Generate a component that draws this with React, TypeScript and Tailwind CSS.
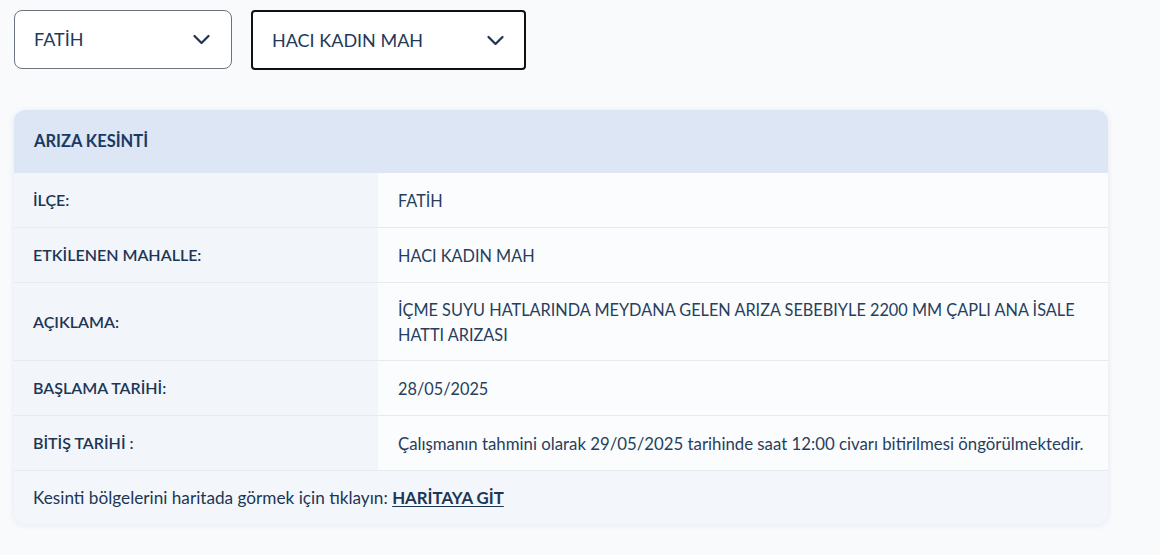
import React from 'react';

type Row = { label: string; value: string; wide?: boolean };

const rows: Row[] = [
  { label: 'İLÇE:', value: 'FATİH' },
  { label: 'ETKİLENEN MAHALLE:', value: 'HACI KADIN MAH' },
  {
    label: 'AÇIKLAMA:',
    value: 'İÇME SUYU HATLARINDA MEYDANA GELEN ARIZA SEBEBIYLE 2200 MM ÇAPLI ANA İSALE HATTI ARIZASI',
  },
  { label: 'BAŞLAMA TARİHİ:', value: '28/05/2025' },
  {
    label: 'BİTİŞ TARİHİ :',
    value: 'Çalışmanın tahmini olarak 29/05/2025 tarihinde saat 12:00 civarı bitirilmesi öngörülmektedir.',
    wide: true,
  },
];

const Chevron: React.FC = () => (
  <svg width="21" height="21" viewBox="0 0 24 24" fill="none" stroke="#1f3550" strokeWidth="2.6" strokeLinecap="round" strokeLinejoin="round">
    <path d="M4 8l8 8 8-8" />
  </svg>
);

const App: React.FC = () => {
  return (
    <div className="min-h-[555px] bg-[#f8fafc] px-[14px] pt-[10px] font-['Lato',sans-serif] text-[#1c3656]">
      <div className="flex gap-[19px]">
        <div className="flex h-[59px] w-[218px] items-center justify-between rounded-lg border border-[#6b7280] bg-white pl-[19px] pr-[19px] text-[18px] text-[#22395a]">
          <span>FATİH</span>
          <Chevron />
        </div>
        <div className="flex h-[60px] w-[275px] items-center justify-between rounded-[4px] border-2 border-[#111] bg-white pl-[19px] pr-[18px] text-[18px] text-[#22395a]">
          <span>HACI KADIN MAH</span>
          <Chevron />
        </div>
      </div>

      <div className="mt-[40px] w-[1094px] overflow-hidden rounded-xl bg-[#f3f6fa] shadow-[0_1px_6px_rgba(148,163,184,0.18)]">
        <div className="flex h-[63px] items-center bg-[#dce6f5] px-[20px] text-[16.5px] font-bold text-[#1b3a63]">
          ARIZA KESİNTİ
        </div>
        {rows.map((r) => (
          <div key={r.label} className="grid grid-cols-[364px_1fr] border-b border-[#e6eaf0]">
            <div className="flex items-center bg-[#f2f5f9] px-[19px] text-[16px] font-semibold">{r.label}</div>
            <div
              className={
                r.wide
                  ? 'flex min-h-[54px] items-center bg-[#fbfcfe] py-[13.5px] pl-[20px] pr-[20px] text-[16.8px] leading-[25px] text-[#263f5c]'
                  : 'flex min-h-[54px] items-center bg-[#fbfcfe] py-[13.5px] pl-[20px] pr-[24px] text-[16.3px] leading-[25px] text-[#263f5c]'
              }
            >
              {r.value}
            </div>
          </div>
        ))}
        <div className="flex h-[53px] items-center bg-[#f3f6fa] px-[19px] text-[17.2px]">
          <span>Kesinti bölgelerini haritada görmek için tıklayın:&nbsp;</span>
          <a href="#" className="text-[16.8px] font-bold underline underline-offset-2">HARİTAYA GİT</a>
        </div>
      </div>
    </div>
  );
};

export default App;
